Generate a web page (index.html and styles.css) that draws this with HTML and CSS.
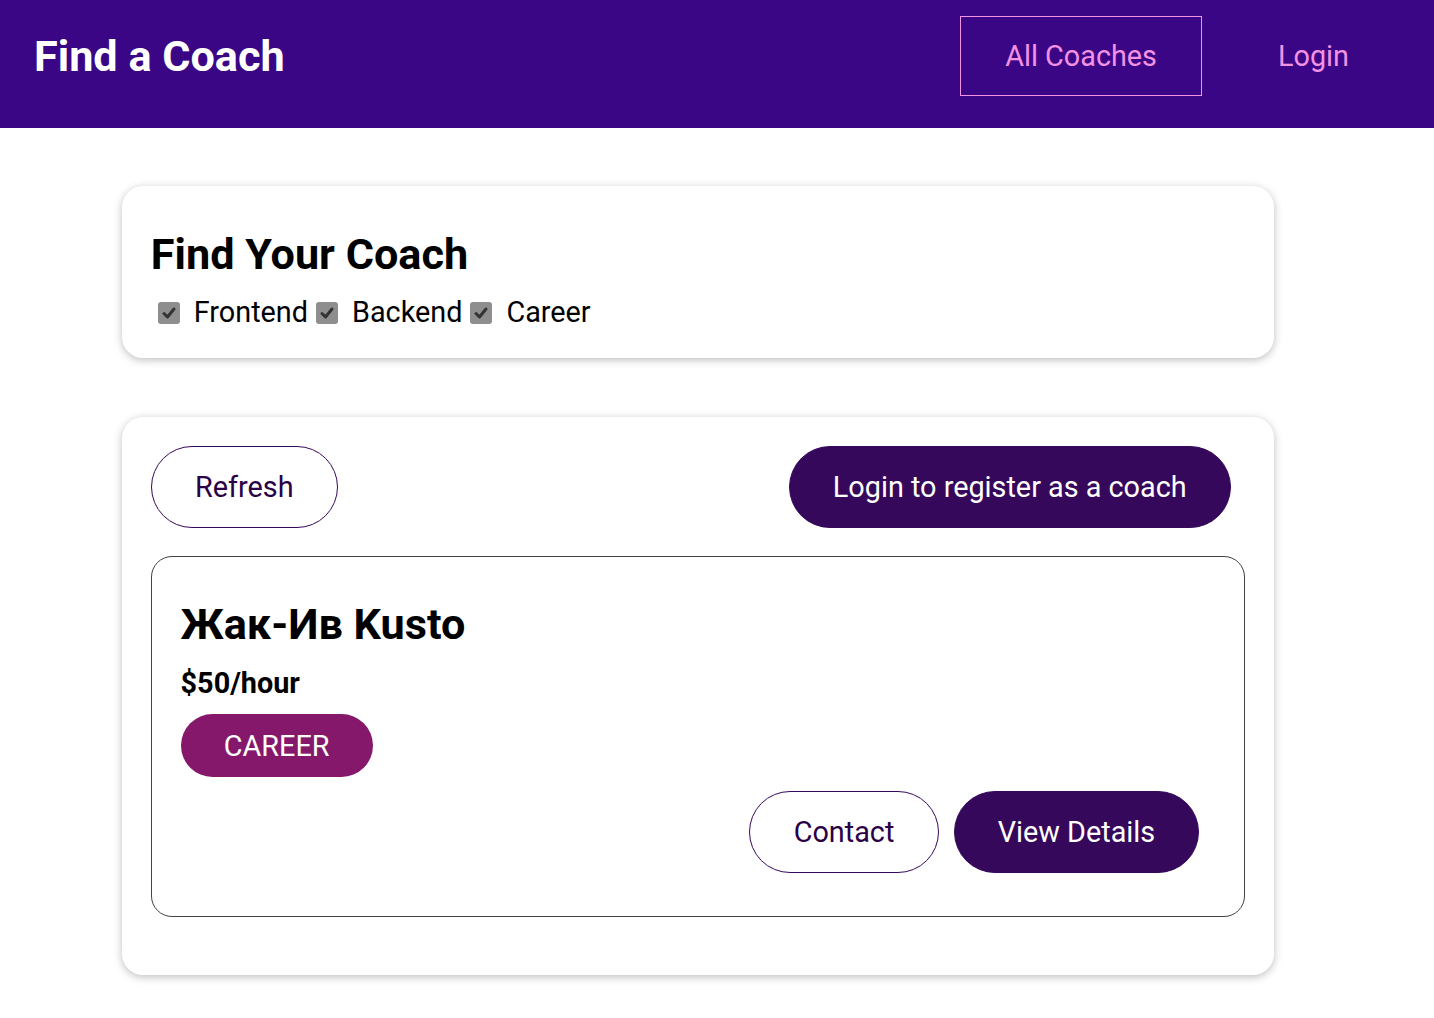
FILE: index.html
```html
<!DOCTYPE html>
<html lang="en">
<head>
<meta charset="utf-8">
<title>Find a Coach</title>
<link rel="stylesheet" href="styles.css">
</head>
<body>
<header class="topbar">
  <h1 class="brand">Find a Coach</h1>
  <nav class="nav">
    <a class="nav-link nav-active" href="#">All Coaches</a>
    <a class="nav-link" href="#">Login</a>
  </nav>
</header>
<main class="page">
  <section class="card">
    <h2 class="filter-title">Find Your Coach</h2>
    <div class="filters">
      <label class="filter"><span class="check"><svg viewBox="0 0 22 22" width="22" height="22"><path d="M6 11.5 L9.5 15 L16 7" fill="none" stroke="#333" stroke-width="3" stroke-linecap="round" stroke-linejoin="round"/></svg></span>Frontend</label>
      <label class="filter"><span class="check"><svg viewBox="0 0 22 22" width="22" height="22"><path d="M6 11.5 L9.5 15 L16 7" fill="none" stroke="#333" stroke-width="3" stroke-linecap="round" stroke-linejoin="round"/></svg></span>Backend</label>
      <label class="filter"><span class="check"><svg viewBox="0 0 22 22" width="22" height="22"><path d="M6 11.5 L9.5 15 L16 7" fill="none" stroke="#333" stroke-width="3" stroke-linecap="round" stroke-linejoin="round"/></svg></span>Career</label>
    </div>
  </section>
  <section class="card">
    <div class="controls">
      <button class="btn btn-outline">Refresh</button>
      <a class="btn" href="#">Login to register as a coach</a>
    </div>
    <ul class="coach-list">
      <li class="coach">
        <h3 class="coach-name">Жак-Ив Kusto</h3>
        <h4 class="coach-rate">$50/hour</h4>
        <div class="badges"><span class="badge career">CAREER</span></div>
        <div class="actions">
          <a class="btn btn-outline" href="#">Contact</a>
          <a class="btn" href="#">View Details</a>
        </div>
      </li>
    </ul>
  </section>
</main>
</body>
</html>
```
FILE: styles.css
```css
* { box-sizing: border-box; }
html, body { margin: 0; padding: 0; }
body {
  font-family: Roboto, "Liberation Sans", Arial, sans-serif;
  font-size: 28.8px;
  color: #000;
  background: #fff;
}

.topbar {
  height: 128px;
  background: #3a0686;
  display: flex;
  align-items: center;
  justify-content: space-between;
  padding: 0 40px 16px 34px;
}
.brand {
  margin: 0;
  color: #fff;
  font-size: 43.2px;
  font-weight: 700;
}
.nav { display: flex; gap: 31px; align-items: center; }
.nav-link {
  display: inline-block;
  color: #f391e3;
  text-decoration: none;
  font-size: 28.8px;
  line-height: 36px;
  padding: 21px 44px;
  border: 1px solid transparent;
}
.nav-active { border-color: #f391e3; }

.page { width: 1396px; display: flow-root; }

.card {
  max-width: 1152px;
  margin: 58px auto 59px;
  padding: 28.8px;
  border-radius: 21px;
  background: #fff;
  box-shadow: 0 2px 8px rgba(0,0,0,0.26);
}

.filter-title {
  margin: 14.4px 0;
  font-size: 43.2px;
  font-weight: 700;
}
.filters { display: flex; align-items: center; gap: 1px; }
.filter { display: flex; align-items: center; line-height: 35px; }
.check {
  flex-shrink: 0;
  width: 22px;
  height: 22px;
  margin: 2px 14px 0 7px;
  background: #8e8e8e;
  border-radius: 3px;
  display: flex;
  align-items: center;
  justify-content: center;
}
.check svg { display: block; }

.controls { display: flex; justify-content: space-between; align-items: center; }

.btn {
  display: inline-block;
  font: inherit;
  font-size: 28.8px;
  line-height: 36px;
  padding: 22px 43.2px;
  margin-right: 14.4px;
  border-radius: 54px;
  border: 1px solid #36085c;
  background: #36085c;
  color: #fff;
  text-decoration: none;
  cursor: pointer;
}
.btn-outline { background: transparent; color: #2a0046; }
.controls .btn-outline { margin-right: 0; }

.coach-list { list-style: none; margin: 0; padding: 0; }
.coach {
  margin: 28px 0 29px;
  padding: 28.8px;
  border: 1px solid #424242;
  border-radius: 21px;
}
.coach-name { margin: 13.4px 0 14.4px; font-size: 43.2px; font-weight: 700; line-height: 52px; }
.coach-rate { margin: 14.4px 0; font-size: 28.8px; font-weight: 700; }
.badges { display: flex; }
.badge {
  display: inline-block;
  padding: 14.4px 43.2px;
  border-radius: 54px;
  line-height: 34px;
  color: #fff;
  margin-right: 14.4px;
}
.career { background: #86186b; }
.actions { display: flex; justify-content: flex-end; margin: 14px 0; }
.actions .btn { margin-right: 16px; }
.actions .btn-outline { margin-right: 15px; }
```
